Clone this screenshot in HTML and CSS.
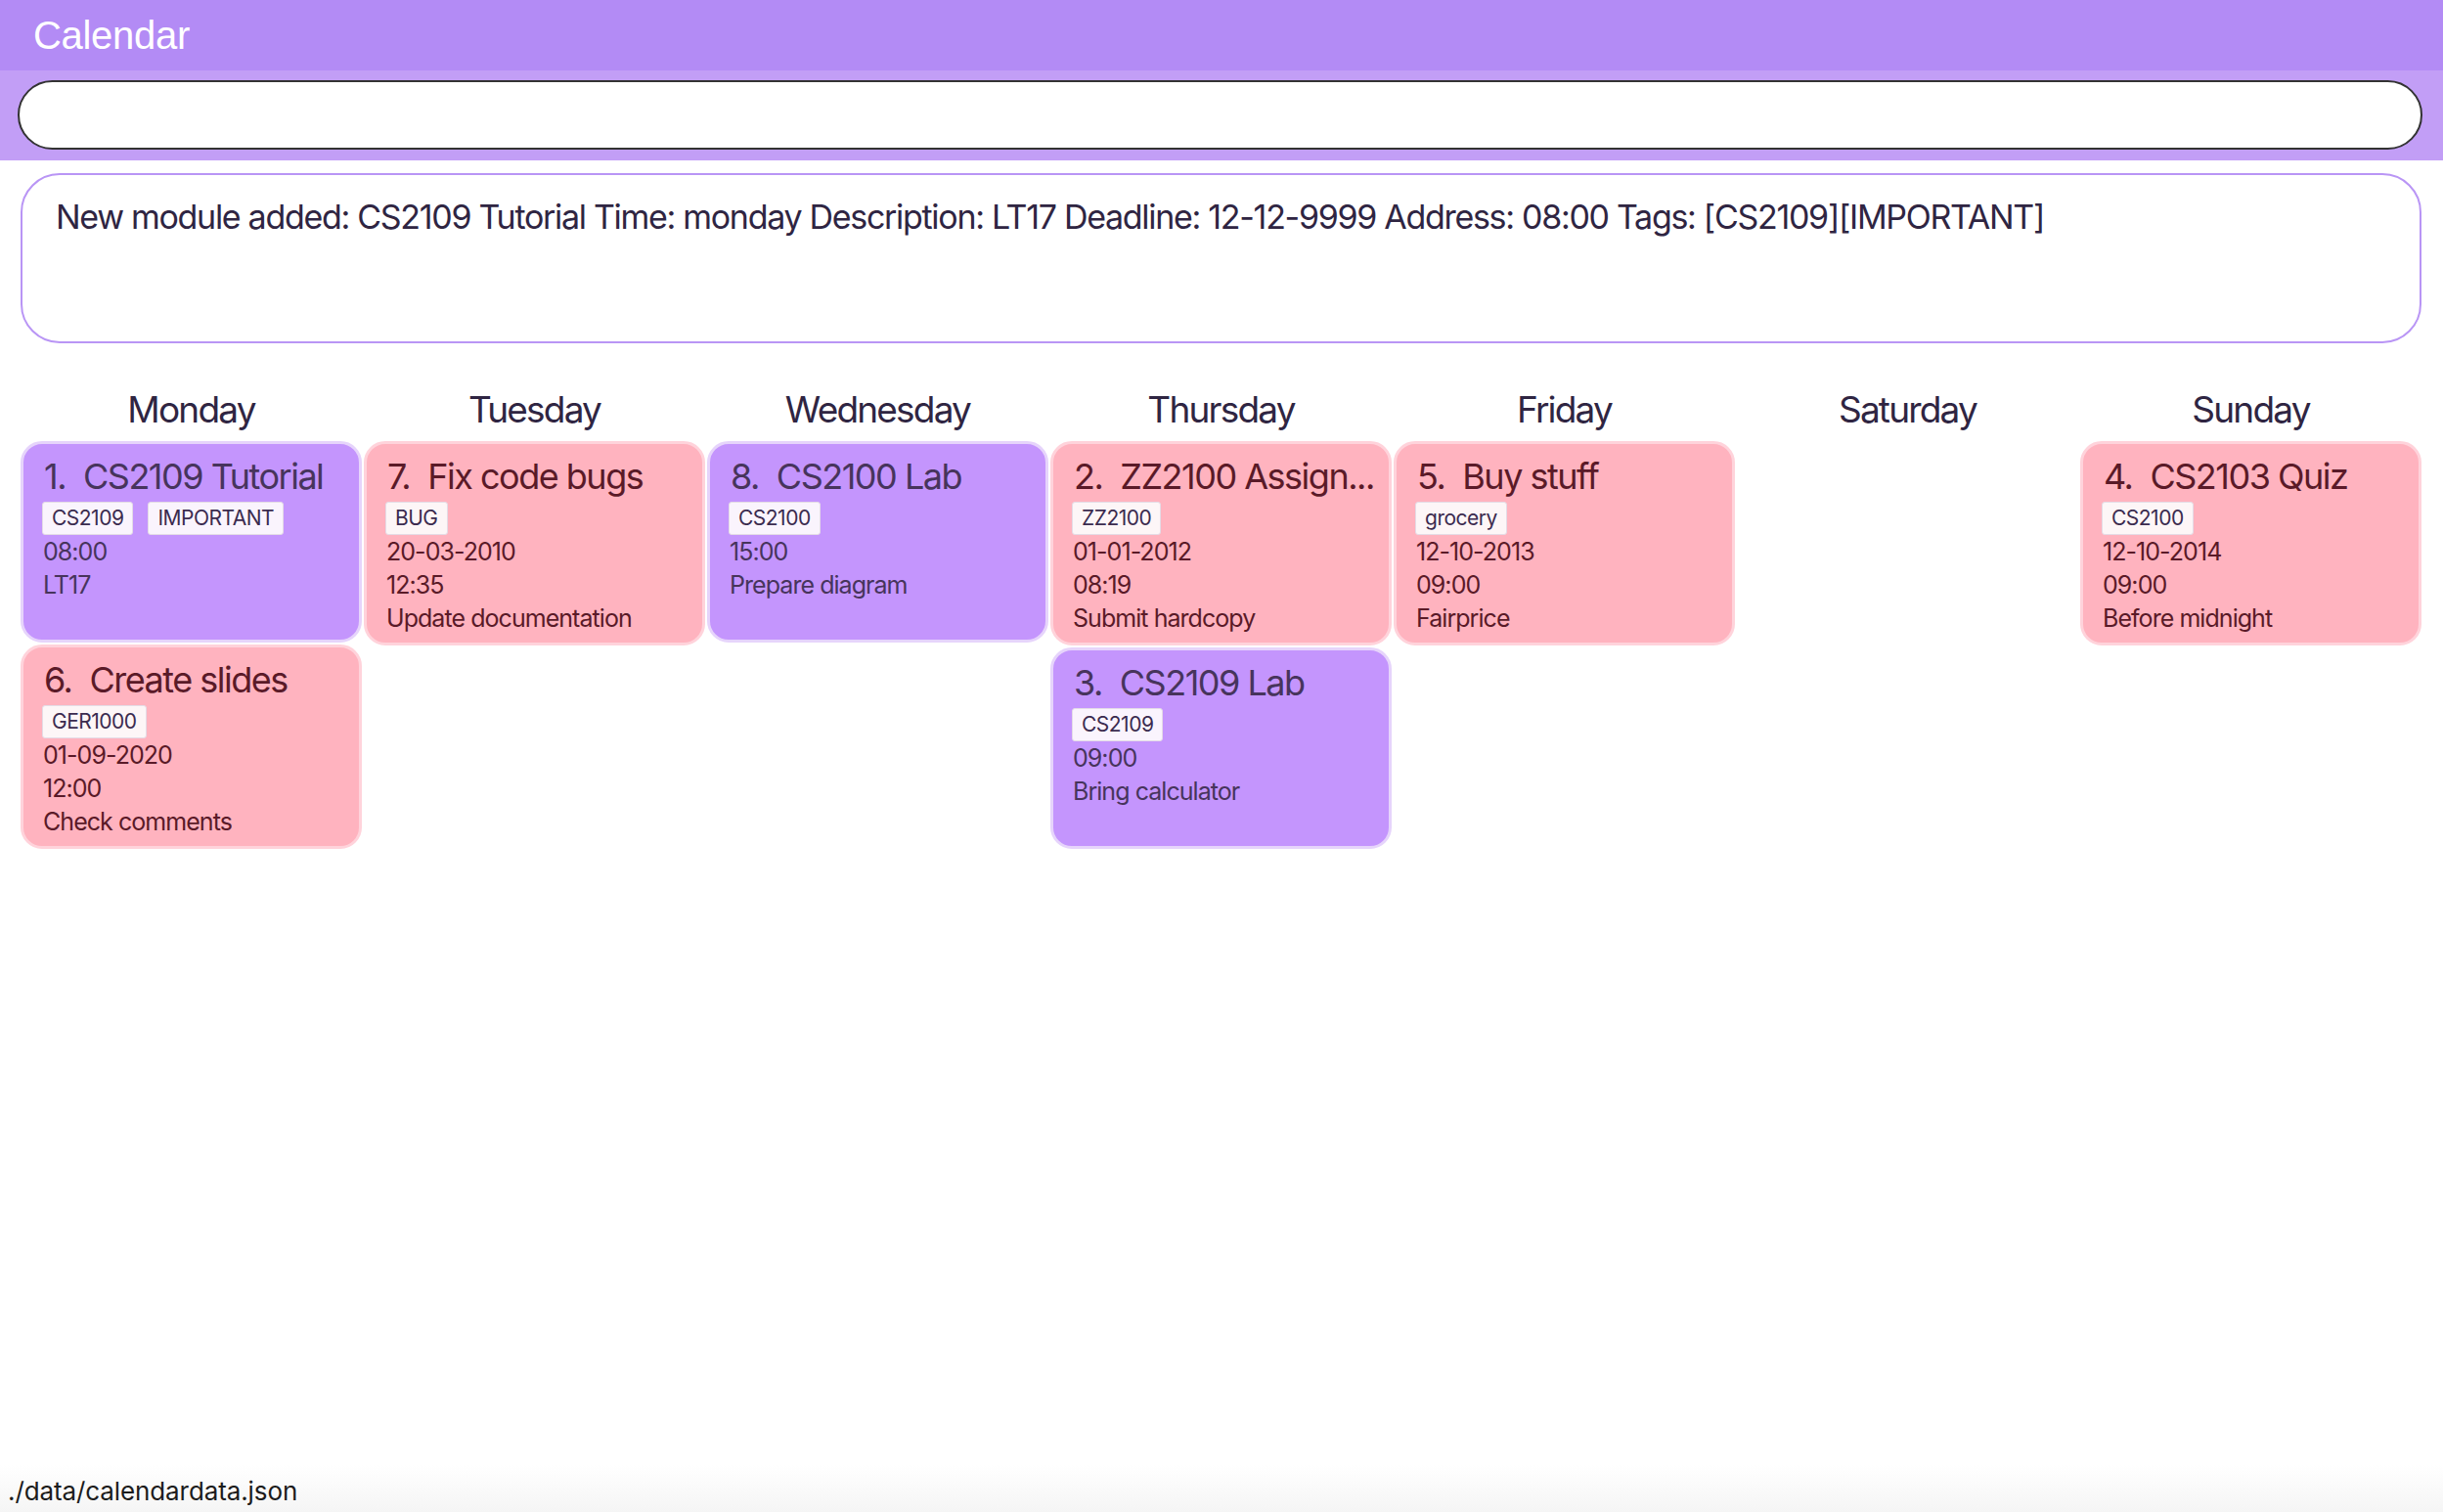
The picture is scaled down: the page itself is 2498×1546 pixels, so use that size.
FILE: index.html
```html
<!DOCTYPE html>
<html lang="en">
<head>
<meta charset="utf-8">
<title>Calendar</title>
<link rel="stylesheet" href="styles.css">
</head>
<body>
<div class="app">
  <header class="titlebar"><span class="app-title">Calendar</span></header>
  <div class="command-band">
    <input class="command-box" type="text" aria-label="command">
  </div>
  <div class="result-box">
    <p class="result-text">New module added: CS2109 Tutorial Time: monday Description: LT17 Deadline: 12-12-9999 Address: 08:00 Tags: [CS2109][IMPORTANT]</p>
  </div>
  <main class="week">
    <section class="day">
      <h2 class="day-name">Monday</h2>
      <div class="cards">
        <article class="card purple">
          <div class="card-title"><span class="num">1.</span>CS2109 Tutorial</div>
          <div class="tags"><span class="tag">CS2109</span><span class="tag">IMPORTANT</span></div>
          <div class="line">08:00</div>
          <div class="line">LT17</div>
        </article>
        <article class="card pink">
          <div class="card-title"><span class="num">6.</span>Create slides</div>
          <div class="tags"><span class="tag">GER1000</span></div>
          <div class="line">01-09-2020</div>
          <div class="line">12:00</div>
          <div class="line">Check comments</div>
        </article>
      </div>
    </section>
    <section class="day">
      <h2 class="day-name">Tuesday</h2>
      <div class="cards">
        <article class="card pink">
          <div class="card-title"><span class="num">7.</span>Fix code bugs</div>
          <div class="tags"><span class="tag">BUG</span></div>
          <div class="line">20-03-2010</div>
          <div class="line">12:35</div>
          <div class="line">Update documentation</div>
        </article>
      </div>
    </section>
    <section class="day">
      <h2 class="day-name">Wednesday</h2>
      <div class="cards">
        <article class="card purple">
          <div class="card-title"><span class="num">8.</span>CS2100 Lab</div>
          <div class="tags"><span class="tag">CS2100</span></div>
          <div class="line">15:00</div>
          <div class="line">Prepare diagram</div>
        </article>
      </div>
    </section>
    <section class="day">
      <h2 class="day-name">Thursday</h2>
      <div class="cards">
        <article class="card pink">
          <div class="card-title"><span class="num">2.</span>ZZ2100 Assign...</div>
          <div class="tags"><span class="tag">ZZ2100</span></div>
          <div class="line">01-01-2012</div>
          <div class="line">08:19</div>
          <div class="line">Submit hardcopy</div>
        </article>
        <article class="card purple">
          <div class="card-title"><span class="num">3.</span>CS2109 Lab</div>
          <div class="tags"><span class="tag">CS2109</span></div>
          <div class="line">09:00</div>
          <div class="line">Bring calculator</div>
        </article>
      </div>
    </section>
    <section class="day">
      <h2 class="day-name">Friday</h2>
      <div class="cards">
        <article class="card pink">
          <div class="card-title"><span class="num">5.</span>Buy stuff</div>
          <div class="tags"><span class="tag">grocery</span></div>
          <div class="line">12-10-2013</div>
          <div class="line">09:00</div>
          <div class="line">Fairprice</div>
        </article>
      </div>
    </section>
    <section class="day">
      <h2 class="day-name">Saturday</h2>
      <div class="cards"></div>
    </section>
    <section class="day">
      <h2 class="day-name">Sunday</h2>
      <div class="cards">
        <article class="card pink">
          <div class="card-title"><span class="num">4.</span>CS2103 Quiz</div>
          <div class="tags"><span class="tag">CS2100</span></div>
          <div class="line">12-10-2014</div>
          <div class="line">09:00</div>
          <div class="line">Before midnight</div>
        </article>
      </div>
    </section>
  </main>
  <footer class="status-bar">./data/calendardata.json</footer>
</div>
</body>
</html>
```

FILE: styles.css
```css
* {
  box-sizing: border-box;
}

html, body {
  margin: 0;
  padding: 0;
  height: 100%;
  background: #ffffff;
}

body {
  font-family: Inter, "Noto Sans", sans-serif;
  color: #2f2542;
}

.app {
  height: 100vh;
  display: flex;
  flex-direction: column;
}

.titlebar {
  height: 72px;
  background: #b38bf5;
  display: flex;
  align-items: center;
  padding-left: 34px;
}

.app-title {
  font-family: "Liberation Sans", Arial, sans-serif;
  font-size: 40px;
  color: #ffffff;
  letter-spacing: -0.3px;
}

.command-band {
  background: #c29ef6;
  padding: 10px 21px 11px 18px;
}

.command-box {
  display: block;
  width: 100%;
  height: 71px;
  border: 2px solid #333333;
  border-radius: 36px;
  background: #ffffff;
  outline: none;
  font-family: Inter, sans-serif;
  font-size: 30px;
  padding: 0 30px;
}

.result-box {
  margin: 13px 22px 0 21px;
  height: 174px;
  border: 2px solid #b995f5;
  border-radius: 40px;
  padding: 22px 30px 0 34px;
}

.result-text {
  margin: 0;
  font-size: 34px;
  line-height: 42px;
  letter-spacing: -1.3px;
  color: #2f2542;
}

.week {
  flex: 1;
  display: grid;
  grid-template-columns: repeat(7, minmax(0, 1fr));
  margin: 46px 21px 0 20px;
  align-items: start;
}

.day {
  display: flex;
  flex-direction: column;
  min-width: 0;
}

.day-name {
  margin: 0 0 10px;
  font-size: 37px;
  line-height: 44px;
  font-weight: 400;
  text-align: center;
  letter-spacing: -1.8px;
  color: #2f2542;
}

.cards {
  display: flex;
  flex-direction: column;
  gap: 2px;
}

.card {
  margin: 0 1px;
  min-height: 206px;
  border: 3px solid;
  border-radius: 22px;
  padding: 11px 8px 8px 19px;
  min-width: 0;
}

.card.purple {
  background: #c495fd;
  border-color: #e6d4fb;
  color: #47345c;
}

.card.pink {
  background: #ffb3bf;
  border-color: #ffd3db;
  color: #5a1a28;
}

.card-title {
  font-size: 36px;
  line-height: 44px;
  letter-spacing: -1.5px;
  white-space: nowrap;
}

.num {
  display: inline-block;
  margin-right: 18px;
  margin-left: 2px;
}

.tags {
  display: flex;
  gap: 15px;
  margin-top: 4px;
}

.tag {
  height: 34px;
  line-height: 32px;
  padding: 0 9px;
  font-size: 21px;
  color: #3b2b4f;
  border: 1px solid #e4dce6;
  border-radius: 3px;
  letter-spacing: -0.5px;
}

.card.purple .tag {
  background: #faf4fd;
}

.card.pink .tag {
  background: #fdf6f7;
}

.line {
  font-size: 25px;
  line-height: 34px;
  letter-spacing: -0.95px;
  padding-left: 1px;
}

.status-bar {
  height: 48px;
  padding: 10px 8px 0;
  font-size: 26px;
  line-height: 34px;
  color: #1c1c1c;
  letter-spacing: -0.1px;
  background: linear-gradient(#ffffff, #f5f5f5);
}
```
